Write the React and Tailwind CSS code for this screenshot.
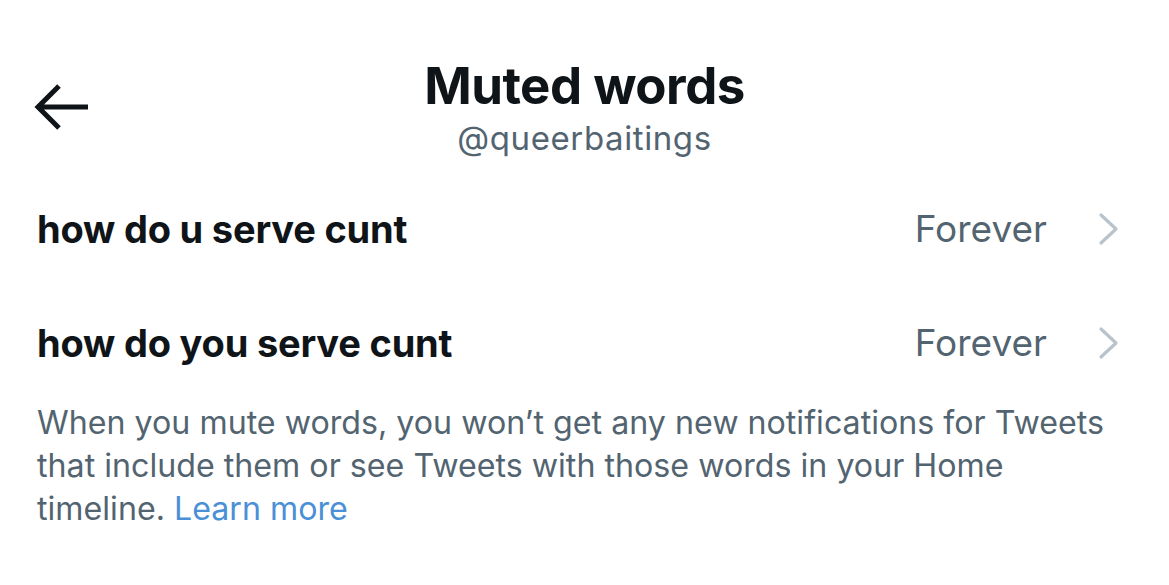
import React from "react";

const font = { fontFamily: "Inter, 'Noto Sans', sans-serif" };

function Chevron() {
  return (
    <svg width="24" height="34" viewBox="0 0 24 34" className="shrink-0">
      <path d="M4 3 L19 17 L4 31" fill="none" stroke="#b9c3cc" strokeWidth="3.2" strokeLinecap="round" strokeLinejoin="round" />
    </svg>
  );
}

function Row({ text }) {
  return (
    <div className="flex items-center h-[114px] pl-[37px] pr-[48px]">
      <div className="flex-1 text-[38px] font-bold text-[#0f1419] tracking-[-0.2px]">{text}</div>
      <div className="text-[37px] text-[#536471] mr-[50px]">Forever</div>
      <Chevron />
    </div>
  );
}

export default function App() {
  return (
    <div className="w-[1169px] h-[585px] bg-white overflow-hidden" style={font}>
      <div className="relative h-[172px] flex flex-col items-center pt-[56px]">
        <div className="absolute left-[34px] top-[84px]">
          <svg width="56" height="46" viewBox="0 0 56 46">
            <path d="M4 23 H54 M25 2 L4 23 L25 44" fill="none" stroke="#0f1419" strokeWidth="5" strokeLinecap="butt" strokeLinejoin="miter" />
          </svg>
        </div>
        <div className="text-[51px] leading-[60px] font-bold text-[#0f1419] tracking-[-0.5px]">Muted words</div>
        <div className="text-[33px] leading-[40px] text-[#536471] tracking-[0.6px] mt-[2px]">@queerbaitings</div>
      </div>
      <Row text="how do u serve cunt" />
      <Row text="how do you serve cunt" />
      <div className="pl-[37px] pr-[57px] text-[32.2px] leading-[43px] text-[#536471] mt-[1px]">
        When you mute words, you won’t get any new notifications for Tweets that include them or see Tweets with those words in your Home timeline. <span className="text-[#4a90d6]">Learn more</span>
      </div>
    </div>
  );
}
